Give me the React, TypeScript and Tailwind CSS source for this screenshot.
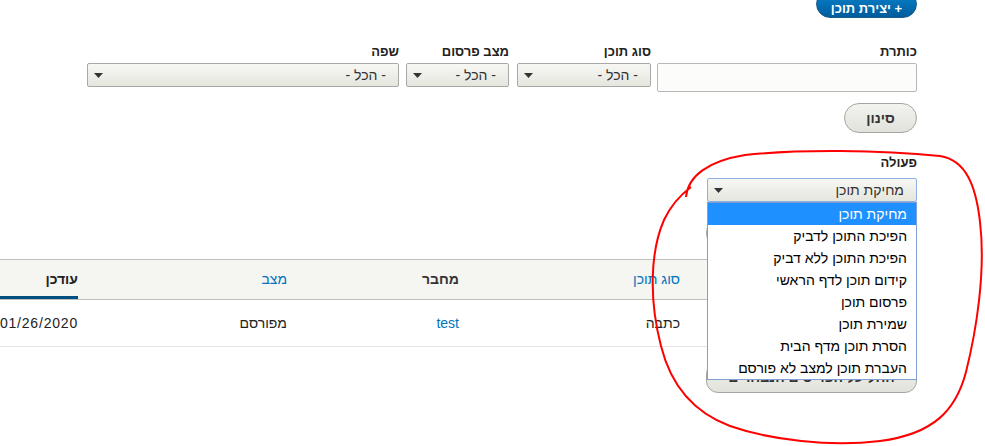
import React from 'react';

const font = { fontFamily: '"Liberation Sans", "DejaVu Sans", Arial, sans-serif' };

function Arrow() {
  return (
    <svg width="9" height="5" viewBox="0 0 9 5" className="shrink-0">
      <path d="M0 0 H9 L4.5 5 Z" fill="#333" />
    </svg>
  );
}

function FakeSelect({ value, width, focused }: { value: string; width: string; focused?: boolean }) {
  return (
    <div
      className={`${width} h-[24px] flex items-center justify-between pr-[12px] pl-[6px] rounded-[2px] border bg-linear-to-b from-[#f7f7f4] to-[#e6e6df] text-[14px] text-[#333] ${
        focused ? 'border-[#8fb0dd]' : 'border-[#a8a8a4]'
      }`}
    >
      <span>{value}</span>
      <Arrow />
    </div>
  );
}

function Label({ children }: { children: React.ReactNode }) {
  return <div className="text-[13px] leading-[16px] font-bold text-[#222] mb-[3px]">{children}</div>;
}

const actions = [
  'מחיקת תוכן',
  'הפיכת התוכן לדביק',
  'הפיכת התוכן ללא דביק',
  'קידום תוכן לדף הראשי',
  'פרסום תוכן',
  'שמירת תוכן',
  'הסרת תוכן מדף הבית',
  'העברת תוכן למצב לא פורסם',
];

function ApplyButton({ label, height }: { label?: string; height: string }) {
  return (
    <div
      className={`w-[211px] ${height} rounded-[12px] border border-[#a6a6a0] bg-linear-to-b from-[#f3f3ef] to-[#e2e2dc] flex items-center justify-center text-[14px] font-bold text-[#333]`}
    >
      {label}
    </div>
  );
}

const cols = 'grid grid-cols-[36px_189px_221px_172px_209px_150px_123px]';

export default function App() {
  return (
    <div dir="rtl" style={font} className="relative w-[985px] h-[446px] overflow-hidden bg-white text-[#333] pr-[68px]">
      {/* create content */}
      <div className="flex -mt-[10px]">
        <div className="w-[101px] h-[28px] rounded-full border border-[#1d5a8c] bg-linear-to-b from-[#0a84d0] to-[#005d9c] flex items-center justify-center pt-[9px] text-[13px] font-bold text-white">
          + יצירת תוכן
        </div>
      </div>

      {/* filters */}
      <div className="flex items-start mt-[26px]">
        <div>
          <Label>כותרת</Label>
          <div className="w-[260px] h-[29px] rounded-[2px] border border-[#b8b8b4] bg-[#fcfcfa]" />
        </div>
        <div className="mr-[6px]">
          <Label>סוג תוכן</Label>
          <FakeSelect value="- הכל -" width="w-[134px]" />
        </div>
        <div className="mr-[8px]">
          <Label>מצב פרסום</Label>
          <FakeSelect value="- הכל -" width="w-[103px]" />
        </div>
        <div className="mr-[7px]">
          <Label>שפה</Label>
          <FakeSelect value="- הכל -" width="w-[312px]" />
        </div>
      </div>

      <div className="flex mt-[11px]">
        <div className="w-[73px] h-[30px] rounded-full border border-[#a6a6a0] bg-linear-to-b from-[#f3f3ef] to-[#e2e2dc] flex items-center justify-center text-[14px] font-bold text-[#333]">
          סינון
        </div>
      </div>

      {/* bulk action */}
      <div className="mt-[22px]">
        <div className="text-[13px] leading-[16px] font-bold text-[#222] mb-[7px]">פעולה</div>
        <div className="relative w-[210px] z-10">
          <FakeSelect value="מחיקת תוכן" width="w-[210px]" focused />
          <div className="absolute top-full right-0 w-[210px] border border-[#7f9fd3] bg-white text-[14px] text-black">
            {actions.map((a, i) => (
              <div
                key={a}
                className={`h-[22px] leading-[22px] pr-[9px] ${i === 0 ? 'bg-[#1e90ff] text-white' : ''}`}
              >
                {a}
              </div>
            ))}
          </div>
        </div>
        <div className="mt-[18px]">
          <ApplyButton height="h-[26px]" />
        </div>
      </div>

      {/* table */}
      <div className={`${cols} w-[1100px] mt-[13px] h-[41px] bg-[#f5f5f2] border-y border-[#bfbfba] text-[14px] items-stretch`}>
        <div />
        <div />
        <div className="pr-[12px] flex items-center text-[#0074bd]">סוג תוכן</div>
        <div className="pr-[12px] flex items-center font-bold text-[#333]">מחבר</div>
        <div className="pr-[12px] flex items-center text-[#0074bd]">מצב</div>
        <div className="pr-[12px] flex">
          <div className="flex-1 flex items-center font-bold text-[#222] border-b-[3px] border-[#004f80] pt-[3px]">עודכן</div>
        </div>
        <div />
      </div>
      <div className={`${cols} w-[1100px] h-[47px] border-b border-[#e4e4e1] text-[14px] items-center`}>
        <div />
        <div />
        <div className="pr-[12px] text-[#222]">כתבה</div>
        <div className="pr-[12px] text-[#0074bd]">test</div>
        <div className="pr-[12px] text-[#222]">מפורסם</div>
        <div className="pr-[12px] text-[#222] tracking-[0.8px]">01/26/2020</div>
        <div />
      </div>

      <div className="mt-[15px]">
        <ApplyButton height="h-[31px]" label="החל על הפריטים הנבחרים" />
      </div>

      {/* hand-drawn annotation */}
      <svg className="absolute inset-0 pointer-events-none z-20" width="985" height="446" viewBox="0 0 985 446">
        <path
          d="M686 197 C688 176 708 161 745 155 C800 149 880 150 940 156 C966 160 976 186 980 222 C986 272 976 332 966 372 C956 410 934 434 880 441 C830 447 770 440 730 426 C695 413 671 386 661 346 C649 300 650 252 664 220 C671 205 679 196 691 187"
          fill="none"
          stroke="#ff0000"
          strokeWidth="2"
        />
      </svg>
    </div>
  );
}
